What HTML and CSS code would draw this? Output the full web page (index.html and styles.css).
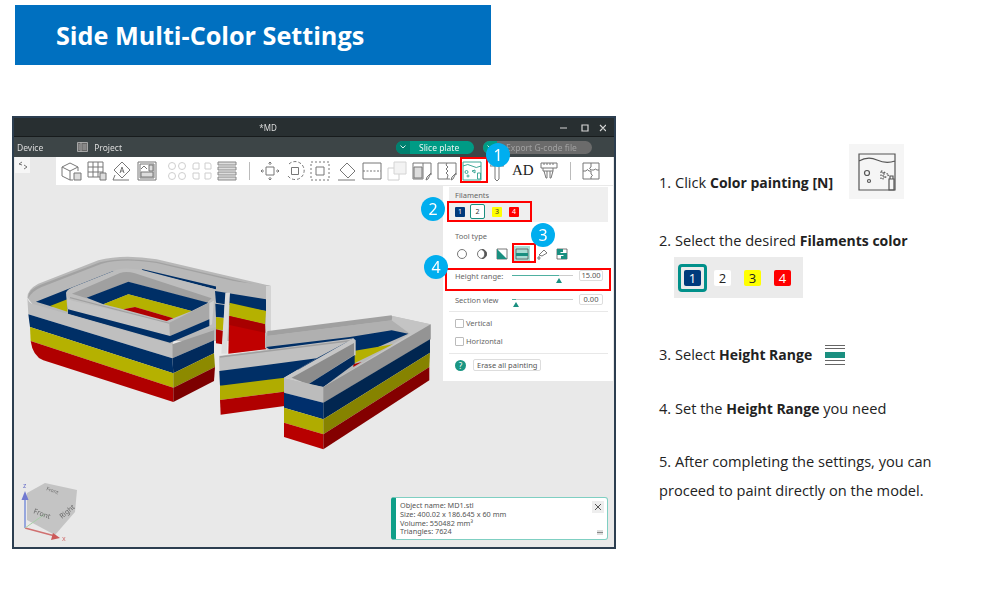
FILE: index.html
```html
<!DOCTYPE html>
<html>
<head>
  <meta charset="UTF-8">
  <title>Side Multi-Color Settings</title>
  <link rel="stylesheet" href="styles.css">
</head>
<body>
  <h1 class="banner">Side Multi-Color Settings</h1>

  <div class="content">
    <div class="app">
      <div class="titlebar">
        <span class="doc-name">*MD</span>
        <div class="win-btns">
          <svg width="46" height="10" viewBox="0 0 46 10"><path d="M0 5h7M22 2h6v6h-6zM40 2l6 6M46 2l-6 6"/></svg>
        </div>
      </div>

      <div class="menubar">
        <span class="menu-item">Device</span>
        <svg class="project-ico" width="11" height="10" viewBox="0 0 11 10"><path d="M.5.5h10v9H.5zM4 .5v9M1.5 3h1.5M1.5 5h1.5M1.5 7h1.5M5.500 3h4M5.500 5h4M5.500 7h4"/></svg>
        <span class="menu-item">Project</span>
        <div class="menu-right">
          <div class="pill pill-slice"><span class="pill-arrow"><svg width="6" height="4" viewBox="0 0 6 4"><path d="M.5.5L3 3 5.500.5"/></svg></span><span class="pill-text">Slice plate</span></div>
          <div class="pill pill-export"><span class="pill-arrow"><svg width="6" height="4" viewBox="0 0 6 4"><path d="M.5.5L3 3 5.500.5"/></svg></span><span class="pill-text">Export G-code file</span></div>
        </div>
      </div>

      <div class="viewport">
        <!-- the model, viewBox is in screenshot coords -->
        <svg class="model" width="600" height="391" viewBox="14 156 600 391">
          <g transform="translate(10 240) scale(.33333)">
            <path fill="#b8b8b8" d="M52,170Q52,145 85,128L265,58Q340,38 440,55L783,135V300H490L487,315L72,195Z"/>
            <path fill="#a2a2a2" d="M55,165Q58,145 90,132L270,64Q340,46 440,62L783,142V146L440,66Q340,50 275,68L95,138Q66,150 55,172Z"/>
            <path fill="#002f66" d="M78,182L310,90L325,95L175,160V205L120,195Z"/>
            <path fill="#b5b100" d="M120,195L172,175V212Z"/>
            <path fill="#002f66" d="M395,84L660,146V156L400,90Z"/>
            <path fill="#bdbdbd" d="M168,155Q172,145 190,138L320,86Q345,78 400,88L655,155V250L480,290L172,205Z"/>
            <path fill="#a0a0a0" d="M186,158L330,96Q350,90 375,97L605,172L590,186L355,122L230,172Z"/>
            <path fill="#002f66" d="M230,170L355,122L595,185L545,210L355,160L280,190Z"/>
            <path fill="#b5b100" d="M280,190L355,160L545,210L490,232L375,198L340,205Z"/>
            <path fill="#b00000" d="M340,205L375,198L490,232L470,240Z"/>
            <path fill="#c4c4c4" d="M170,160Q172,176 190,180L478,245V285L174,205Z"/>
            <path fill="#a0a0a0" d="M180,168L478,245V248L180,172Z"/>
            <path fill="#a8a8a8" d="M478,245L612,178L600,235L480,285Z"/>
            <path fill="#d0d0d0" d="M598,186L612,178L606,250L598,254Z"/>
            <path fill="#002f66" d="M174,205L480,285L598,235V255L480,305L174,218Z"/>
            <path fill="#bfbfbf" d="M52,170Q55,186 72,190L487,310V352L55,220Z"/>
            <path fill="#002f66" d="M55,220L487,352L490,397L60,258Z"/>
            <path fill="#b5b100" d="M60,258L490,397V440L62,300Z"/>
            <path fill="#b00000" d="M62,300L490,440V483L100,358Q68,345 62,300Z"/>
            <path fill="#9b9b9b" d="M487,310L612,268V298L487,352Z"/>
            <path fill="#012a5c" d="M487,352L612,298V337L490,397Z"/>
            <path fill="#8d8a00" d="M490,397L612,337L615,378L490,440Z"/>
            <path fill="#7d0000" d="M490,440L615,378L612,420L490,483Z"/>
          </g>
          <g transform="translate(210 280) scale(.33333)">
            <path fill="#b8b8b8" d="M18,-6L183,15V155H168L60,150L18,60Z"/>
            <path fill="#002f66" d="M15,30L168,55V90L18,65Z"/>
            <path fill="#b5b100" d="M58,65L168,90L165,130L58,105Z"/>
            <path fill="#c00000" d="M58,105L165,130L168,205L55,218Z"/>
            <path fill="#a80000" d="M58,105L165,130V155L58,132Z"/>
            <path fill="#d4d4d4" d="M168,15H183V158H168Z"/>
            <path fill="#002f66" d="M16,68L44,72L42,110L18,108Z"/>
            <path fill="#b5b100" d="M18,108L42,112L40,148L18,145Z"/>
            <path fill="#b00000" d="M18,145L40,150L37,190L18,187Z"/>
            <path fill="#dcdcdc" d="M46,35H60L50,218H34Z"/>
            <path fill="#b8b8b8" d="M165,155L545,105L660,130V180L340,365L165,200Z"/>
            <path fill="#a0a0a0" d="M172,150L545,103L548,118L172,165Z"/>
            <path fill="#b0b0b0" d="M168,165L545,118L600,158L430,172L168,196Z"/>
            <path fill="#002f66" d="M168,198L420,168L545,148L595,158L450,222L300,290Z"/>
            <path fill="#b4b000" d="M430,210L550,190L430,248Z"/>
            <path fill="#b00000" d="M430,250L455,243L430,258Z"/>
            <path fill="#c0c0c0" d="M27,225L432,172L320,232L222,290V335L30,315Z"/>
            <path fill="#a0a0a0" d="M30,226L425,176L432,180L30,230Z"/>
            <path fill="#002f66" d="M28,270L320,232L222,290V335L30,314Z"/>
            <path fill="#b0ac00" d="M30,314L224,290V332L30,357Z"/>
            <path fill="#b00000" d="M30,357L224,332V375L32,401Z"/>
            <path fill="#c6c6c6" d="M222,290L430,172L437,178V222L340,318Z"/>
            <path fill="#8c8c8c" d="M245,290L432,186V222L295,310Z"/>
            <path fill="#012a5c" d="M295,310L434,222V248L340,318Z"/>
            <path fill="#c4c4c4" d="M340,318L600,158L545,118L548,105L662,130V175L340,365Z"/>
            <path fill="#bcbcbc" d="M222,290L340,318V365L222,335Z"/>
            <path fill="#949494" d="M340,318L662,130V175L340,365Z"/>
            <path fill="#002f6c" d="M222,335L340,365V415L222,380Z"/>
            <path fill="#012650" d="M340,365L660,175V215L340,415Z"/>
            <path fill="#b0ac00" d="M222,380L340,415V460L222,425Z"/>
            <path fill="#868300" d="M340,415L660,215L658,258L340,460Z"/>
            <path fill="#b80000" d="M222,425L340,460V505L222,468Z"/>
            <path fill="#840000" d="M340,460L658,258V298L340,505Z"/>
          </g>
        </svg>

        <div class="toolbar">
          <svg class="tool tool-wide" viewBox="0 0 22 20"><path d="M2 6l8-4 8 4v4M2 6v9l8 4h3M2 6l8 4v9M10 10l8-4"/><path class="fill-grey" d="M14 12h7v7h-7z"/></svg>
          <svg class="tool" viewBox="0 0 20 20"><path d="M1 1h15v15H1zM1 6h15M1 11h15M6 1v15M11 1v15"/><path class="fill-grey" d="M13 12h6v7h-6z"/></svg>
          <svg class="tool" viewBox="0 0 20 20"><path d="M10 1l8 8-8 8-8-8zM1 19h16M3 14l-2 5"/><path d="M8 12l2-6 2 6M8.500 10h3"/></svg>
          <svg class="tool" viewBox="0 0 20 20"><path d="M1 1h18v18H1zM3 3h14v14H3z"/><path class="fill-grey" d="M4 11h12v5H4zM12 4h4v6h-4z"/><path d="M4 8l3-3 3 3"/></svg>
          <svg class="tool tool-faded gap-group" viewBox="0 0 20 20"><circle cx="5" cy="5" r="3.500"/><circle cx="15" cy="5" r="3.500"/><circle cx="5" cy="15" r="3.500"/><circle cx="15" cy="15" r="3.500"/></svg>
          <svg class="tool tool-faded" viewBox="0 0 20 20"><path d="M7 2H3Q1 2 1 4v4h6zM13 2h4q2 0 2 2v4h-6zM7 18H3q-2 0-2-2v-4h6zM13 18h4q2 0 2-2v-4h-6z"/></svg>
          <svg class="tool" viewBox="0 0 20 20"><path class="fill-light" d="M1 1h18v3H1zM1 6h18v3H1zM1 11h18v3H1zM1 16h18v3H1z"/></svg>
          <span class="tool-sep"></span>
          <svg class="tool gap-group" viewBox="0 0 20 20"><path d="M6 6h8v8H6zM10 1v3M8.500 2.500L10 1l1.500 1.500M10 19v-3M8.500 17.500L10 19l1.500-1.500M1 10h3M2.500 8.500L1 10l1.500 1.500M19 10h-3M17.500 8.500L19 10l-1.500 1.500"/></svg>
          <svg class="tool" viewBox="0 0 20 20"><path d="M6.500 6.500h7v7h-7z"/><path stroke-dasharray="3 2" d="M4 3a9 9 0 1 1-1 12"/></svg>
          <svg class="tool" viewBox="0 0 20 20"><path d="M6 6h8v8H6z"/><path stroke-dasharray="2 2" d="M1 1h18v18H1z"/></svg>
          <svg class="tool gap-small" viewBox="0 0 20 20"><path d="M10 2l8 8-7 7-8-8zM1 19h17M4 10l7 7"/></svg>
          <svg class="tool" viewBox="0 0 20 20"><path d="M1 2h18v16H1z"/><path stroke-dasharray="2 1.500" d="M1 10h18"/></svg>
          <svg class="tool tool-faded" viewBox="0 0 20 20"><path d="M1 7h11v12H1z"/><path class="fill-light" d="M7 1h12v12H7z"/></svg>
          <svg class="tool" viewBox="0 0 20 20"><path d="M1 2h18v12M1 2v16h10V2"/><path class="fill-grey" d="M2 6h8v11H2z"/><path d="M19 12l-3 6-2 1 1-3z"/></svg>
          <svg class="tool" viewBox="0 0 20 20"><path d="M1 2h18v12M1 2v16h12M10 2l-1 2 2 2-2 2 2 2-2 2 2 2-1 4"/><path d="M19 12l-3 6-2 1 1-3z"/></svg>
          <svg class="tool tool-teal" viewBox="0 0 20 20"><path d="M1 1h18v18H1zM1 5q5-3 9 0t9 0"/><circle cx="4.500" cy="11" r="1.500"/><circle cx="6" cy="15" r="1"/><path d="M10 10l3-1v3zM15.500 12h3v6h-3z"/></svg>
          <svg class="tool tool-narrow" viewBox="0 0 14 20"><path d="M0 2h14v3H9v13l-2 2-2-2V5H0z"/></svg>
          <span class="tool-ad">AD</span>
          <svg class="tool" viewBox="0 0 20 20"><path d="M2 2h16v5H2zM5 2v2M8 2v2M11 2v2M14 2v2M4 7v3h10V7M5 10l2 7h1v-7M11 10v7h1l2-7"/></svg>
          <span class="tool-sep sep-late"></span>
          <svg class="tool" viewBox="0 0 20 20"><path d="M2 2h16v16H2zM10 2v4q-3 1 0 3M2 10h3q1-3 3 0h2v3q3 1 0 3v2M10 9h3q1-2 3 0h2"/></svg>
        </div>

        <button class="side-toggle" type="button">
          <svg width="10" height="9" viewBox="0 0 10 9"><path d="M4 1L1 3l3 1M6 4l3 2-3 2"/></svg>
        </button>

        <div class="panel">
          <div class="fil-section">
            <div class="panel-label">Filaments</div>
            <div class="fil-row">
              <span class="fil fil-blue">1</span>
              <span class="fil-ring"><span class="fil fil-white">2</span></span>
              <span class="fil fil-yellow">3</span>
              <span class="fil fil-red">4</span>
            </div>
          </div>
          <div class="tool-section">
            <div class="panel-label">Tool type</div>
            <div class="tt-row">
              <svg class="tt" viewBox="0 0 12 12"><circle cx="6" cy="6" r="4.500"/></svg>
              <svg class="tt" viewBox="0 0 12 12"><circle cx="6" cy="6" r="4.500"/><path class="fill-dark" d="M6 1.500a4.500 4.500 0 0 1 4.500 4.500A4.500 4.500 0 0 1 6 10.500a5 5 0 0 0 0-9z"/></svg>
              <svg class="tt" viewBox="0 0 12 12"><path d="M1 1h10v10H1z"/><path class="fill-teal" d="M1 1l10 10H1z"/></svg>
              <svg class="tt tt-active" viewBox="0 0 16 16"><path d="M2 3h12v10H2z"/><path class="fill-teal" d="M2 7h12v3H2z"/></svg>
              <svg class="tt" viewBox="0 0 12 12"><path d="M3 7l5-5 3 3-5 3zM2 9q2-1 2 1t-2 1z"/></svg>
              <svg class="tt" viewBox="0 0 12 12"><path d="M1 1h10v10H1z"/><path class="fill-teal" d="M1 1h6v3H4l3 3H1zM11 11H5V8h3L5 5h6z"/></svg>
            </div>
          </div>
          <div class="slider-row">
            <span class="slider-label">Height range:</span>
            <div class="slider"><span class="slider-fill"></span><span class="slider-thumb"></span></div>
            <span class="value-box">15.00</span>
          </div>
          <div class="slider-row slider-row-b">
            <span class="slider-label">Section view</span>
            <div class="slider slider-zero"><span class="slider-fill"></span><span class="slider-thumb"></span></div>
            <span class="value-box">0.00</span>
          </div>
          <div class="check-section">
            <label class="check"><span class="check-box"></span>Vertical</label>
            <label class="check"><span class="check-box"></span>Horizontal</label>
          </div>
          <div class="panel-foot">
            <span class="help">?</span>
            <span class="erase-btn">Erase all painting</span>
          </div>
        </div>

        <svg class="navcube" width="70" height="64" viewBox="14 480 70 64">
          <path fill="#c4c4c4" d="M27 493L45 483l32 7-2 22-20 23-28-15z"/>
          <path stroke="#7a8fd8" stroke-width="1.500" fill="none" d="M25 528V496"/>
          <path fill="#7079d0" d="M25 491l3.500 9h-7z"/>
          <path stroke="#d07070" stroke-width="1.500" fill="none" d="M25 528l30 8"/>
          <path fill="#cc5a5a" d="M60 538l-9 2 2-7z"/>
          <path stroke="#a8d0a8" fill="none" d="M25 528l20-14"/>
          <text class="nav-label" transform="translate(33 513) rotate(20)">Front</text>
          <text class="nav-label" transform="translate(62 519) rotate(-40)">Right</text>
          <text class="nav-label nav-small" transform="translate(46 490) rotate(20)">Front</text>
          <text class="nav-axis nav-z" x="23" y="488">z</text>
          <text class="nav-axis nav-x" x="62" y="541">x</text>
        </svg>

        <div class="info-card">
          <div class="info-lines">
            <div>Object name: MD1.stl</div>
            <div>Size: 400.02 x 186.645 x 60 mm</div>
            <div>Volume: 550482 mm³</div>
            <div>Triangles: 7624</div>
          </div>
          <span class="info-close">
            <svg width="8" height="8" viewBox="0 0 8 8"><path d="M1 1l6 6M7 1L1 7"/></svg>
          </span>
          <span class="info-min"></span>
        </div>
      </div>

      <span class="hl hl-1"></span>
      <span class="hl hl-2"></span>
      <span class="hl hl-3"></span>
      <span class="hl hl-4"></span>
      <span class="badge badge-1">1</span>
      <span class="badge badge-2">2</span>
      <span class="badge badge-3">3</span>
      <span class="badge badge-4">4</span>
    </div>

    <div class="steps">
      <div class="step step-1">
        <span class="step-1-text">1. Click <b>Color painting [N]</b></span>
        <span class="paint-box">
          <svg width="38" height="38" viewBox="0 0 38 38"><path d="M1 1h36v36H1zM1 8q9-5 18-1t18 1"/><circle cx="9" cy="20" r="2.500"/><circle cx="11" cy="28" r="1.500"/><path stroke-dasharray="1.500 1.500" d="M23 18h2v8h-2zM26 19l5 3-5 3z"/><path d="M31 26h5v11h-5zM32 26v-3h3v3"/></svg>
        </span>
      </div>
      <div class="step step-2">2. Select the desired <b>Filaments color</b></div>
      <div class="swatches">
        <span class="sw-ring"><span class="sw sw-blue">1</span></span>
        <span class="sw sw-white">2</span>
        <span class="sw sw-yellow">3</span>
        <span class="sw sw-red">4</span>
      </div>
      <div class="step step-3">
        <span>3. Select <b>Height Range</b></span>
        <span class="range-ico"><span></span><span></span><span class="range-mid"></span><span></span><span></span></span>
      </div>
      <div class="step step-4">4. Set the <b>Height Range</b> you need</div>
      <div class="step step-5">5. After completing the settings, you can<br>proceed to paint directly on the model.</div>
    </div>
  </div>
</body>
</html>
```

FILE: styles.css
```css
html, body {
  margin: 0;
  background: #fff;
}

body {
  width: 1000px;
  height: 600px;
  overflow: hidden;
  font-family: "Open Sans", "Noto Sans", sans-serif;
}

.banner {
  width: 476px;
  height: 60px;
  margin: 5px 0 0 15px;
  padding-left: 41px;
  box-sizing: border-box;
  background: #0070c0;
  color: #fff;
  font-size: 25.200px;
  font-weight: 700;
  line-height: 60px;
}

.content {
  display: flex;
  margin: 51px 0 0 12px;
}

/* app window */
.app {
  position: relative;
  display: flex;
  flex-direction: column;
  width: 604px;
  height: 433px;
  box-sizing: border-box;
  border: 2px solid #2c3e50;
  background: #e9e9e9;
  font-family: "Noto Sans", sans-serif;
  flex: none;
}

.titlebar {
  display: flex;
  align-items: center;
  justify-content: center;
  height: 18px;
  padding-right: 92px;
  background: #282f31;
  border-bottom: 1px solid #171b1c;
  position: relative;
  flex: none;
}

.titlebar, .menubar, .viewport {
  filter: blur(.35px);
}

.doc-name {
  color: #ddd;
  font-size: 8px;
}

.win-btns {
  position: absolute;
  right: 8px;
  top: 5px;
  line-height: 0;
}

.win-btns path {
  fill: none;
  stroke: #d5d5d5;
  stroke-width: 1.200;
}

.menubar {
  display: flex;
  align-items: center;
  height: 20px;
  padding-left: 3px;
  background: #3d4547;
  flex: none;
  color: #dcdcdc;
  font-size: 8.500px;
}

.project-ico {
  margin: 0 6px 0 34px;
}

.project-ico path {
  fill: #666;
  stroke: #bbb;
  stroke-width: .8;
}

.menu-right {
  display: flex;
  margin-left: auto;
  gap: 9px;
  margin-right: 22px;
}

.pill {
  display: flex;
  align-items: center;
  height: 13px;
  border-radius: 7px;
  overflow: hidden;
  color: #e8f5f2;
  font-size: 8.500px;
}

.pill-arrow {
  display: flex;
  align-items: center;
  justify-content: center;
  width: 14px;
  height: 13px;
  background: #00806f;
}

.pill-arrow path {
  fill: none;
  stroke: #d8f0ec;
}

.pill-slice {
  width: 78px;
  background: #009b85;
}

.pill-slice .pill-text {
  margin-left: 9px;
}

.pill-export {
  width: 109px;
  background: #6b6b6b;
  color: #a0a0a0;
}

.pill-export .pill-arrow {
  background: #009b85;
}

.pill-export .pill-text {
  margin-left: 9px;
}

.viewport {
  position: relative;
  flex: 1;
  background: #e9e9e9;
}

.model {
  position: absolute;
  left: 0;
  top: 0;
}

/* toolbar */
.toolbar {
  position: relative;
  display: flex;
  align-items: center;
  gap: 5px;
  width: 557px;
  height: 28px;
  margin-left: 42px;
  padding: 0 0 1px 4px;
  box-sizing: border-box;
  background: #fff;
}

.tool {
  width: 20px;
  height: 20px;
  flex: none;
}

.tool path, .tool circle {
  fill: none;
  stroke: #777;
  stroke-width: 1;
}

.tool-wide {
  width: 22px;
}

.tool-narrow {
  width: 14px;
  margin: 0 3px;
}

.tool .fill-grey {
  fill: #ddd;
}

.tool .fill-light {
  fill: #ddd;
  stroke: #888;
}

.tool-faded {
  opacity: .35;
}

.gap-group {
  margin-left: 5px;
}

.gap-small {
  margin-left: 2px;
}

.tool-sep {
  width: 1px;
  height: 18px;
  margin-left: 7px;
  background: #bbb;
  flex: none;
}

.sep-late {
  margin-left: 6px;
  margin-right: 5px;
}

.tool-teal path, .tool-teal circle {
  stroke: #3fa897;
}

.tool-ad {
  width: 22px;
  font-family: "Liberation Serif", serif;
  font-size: 15px;
  color: #222;
  flex: none;
}

.side-toggle {
  position: absolute;
  left: 1px;
  top: 0;
  width: 15px;
  height: 16px;
  padding: 0;
  border: 0;
  background: #f6f6f6;
  line-height: 0;
}

.side-toggle path {
  fill: none;
  stroke: #555;
  stroke-width: .8;
}

/* color painting panel */
.panel {
  position: absolute;
  left: 429px;
  top: 29px;
  width: 170px;
  height: 195px;
  padding: 1px 5px 0 6px;
  box-sizing: border-box;
  background: #fff;
  color: #666;
  font-size: 7.500px;
}

.fil-section {
  height: 35px;
  padding: 3px 6px 0;
  box-sizing: border-box;
  background: #efefef;
}

.panel-label {
  line-height: 11px;
}

.fil-row {
  display: flex;
  align-items: center;
  margin-top: 3px;
}

.fil {
  display: inline-block;
  width: 10px;
  height: 10px;
  border-radius: 1px;
  text-align: center;
  font-size: 7px;
  line-height: 10px;
}

.fil-blue {
  background: #003a7c;
  color: #fff;
}

.fil-ring {
  display: inline-flex;
  align-items: center;
  justify-content: center;
  width: 15px;
  height: 15px;
  margin: 0 5px;
  box-sizing: border-box;
  border: 1px solid #1a8f80;
  border-radius: 2px;
  background: #fff;
}

.fil-white {
  background: #fff;
  color: #333;
}

.fil-yellow {
  margin-left: 2px;
  background: #ff0;
  color: #333;
}

.fil-red {
  margin-left: 7px;
  background: #f00;
  color: #fff;
}

.tool-section {
  padding: 9px 6px 0;
}

.tt-row {
  display: flex;
  align-items: center;
  gap: 8px;
  height: 20px;
  margin: 2px 0 0 1px;
}

.tt {
  width: 12px;
  height: 12px;
  flex: none;
}

.tt path, .tt circle {
  fill: none;
  stroke: #555;
  stroke-width: .8;
}

.tt .fill-dark {
  fill: #555;
}

.tt .fill-teal {
  fill: #1a8f80;
  stroke: none;
}

.tt-active {
  width: 16px;
  height: 16px;
  margin: 0 -2px;
  background: #a9dcd4;
}

.slider-row {
  display: flex;
  align-items: center;
  height: 13px;
  margin-top: 5px;
  padding-left: 6px;
}

.slider-row-b {
  margin-top: 11px;
}

.slider-label {
  width: 57px;
  flex: none;
}

.slider {
  position: relative;
  width: 61px;
  height: 1px;
  background: #ccc;
  flex: none;
}

.slider-fill {
  display: block;
  width: 47px;
  height: 1px;
  background: #4fb0a0;
}

.slider-zero .slider-fill {
  width: 4px;
}

.slider-thumb {
  position: absolute;
  left: 44px;
  top: 3px;
  width: 0;
  height: 0;
  border: 3px solid transparent;
  border-top: 0;
  border-bottom: 5px solid #1a8f80;
}

.slider-zero .slider-thumb {
  left: 1px;
}

.value-box {
  width: 24px;
  height: 11px;
  margin-left: 6px;
  box-sizing: border-box;
  border: 1px solid #ddd;
  border-radius: 2px;
  text-align: center;
  line-height: 9px;
  color: #555;
  flex: none;
}

.check-section {
  margin-top: 5px;
  padding: 2px 6px 0;
  height: 39px;
  border-top: 1px solid #e8e8e8;
  border-bottom: 1px solid #e8e8e8;
}

.check {
  display: flex;
  align-items: center;
  gap: 2px;
  height: 18px;
}

.check-box {
  width: 9px;
  height: 9px;
  box-sizing: border-box;
  border: 1px solid #bbb;
  border-radius: 1px;
  background: #fff;
}

.panel-foot {
  display: flex;
  align-items: center;
  padding: 5px 0 0 6px;
}

.help {
  width: 11px;
  height: 11px;
  border-radius: 50%;
  background: #1a9683;
  color: #fff;
  text-align: center;
  font-size: 8px;
  line-height: 11px;
}

.erase-btn {
  margin-left: 7px;
  padding: 0 3px;
  height: 12px;
  box-sizing: border-box;
  border: 1px solid #ddd;
  border-radius: 2px;
  line-height: 10px;
  color: #555;
}

/* red marks and numbered badges on top of the window */
.hl {
  position: absolute;
  border: 2px solid #f00;
  box-sizing: border-box;
}

.hl-1 { left: 446px; top: 39px; width: 28px; height: 26px; }
.hl-2 { left: 433px; top: 83px; width: 85px; height: 21px; }
.hl-3 { left: 498px; top: 125px; width: 24px; height: 20px; }
.hl-4 { left: 431px; top: 150px; width: 166px; height: 23px; }

.badge {
  position: absolute;
  width: 24px;
  height: 24px;
  border-radius: 50%;
  background: #00aeef;
  color: #fff;
  text-align: center;
  font-size: 16px;
  line-height: 24px;
}

.badge-1 { left: 472px; top: 25px; }
.badge-2 { left: 407px; top: 79px; }
.badge-3 { left: 517px; top: 105px; }
.badge-4 { left: 410px; top: 137px; }

.navcube {
  position: absolute;
  left: 0;
  bottom: 3px;
  filter: blur(.5px);
}

.nav-label {
  fill: #666;
  font-size: 7px;
}

.nav-small {
  font-size: 5px;
}

.nav-axis {
  font-size: 7px;
}

.nav-z {
  fill: #6a70c8;
}

.nav-x {
  fill: #d07070;
}

.info-card {
  position: absolute;
  left: 377px;
  bottom: 7px;
  width: 217px;
  height: 43px;
  padding: 3px 0 0 4px;
  box-sizing: border-box;
  border: 1px solid #7fcfc2;
  border-left: 5px solid #0f9f88;
  border-radius: 3px;
  background: #fff;
  color: #555;
  font-size: 7.300px;
  line-height: 8.800px;
}

.info-close {
  position: absolute;
  right: 3px;
  top: 3px;
  display: flex;
  align-items: center;
  justify-content: center;
  width: 12px;
  height: 12px;
  background: #eee;
}

.info-close path {
  fill: none;
  stroke: #555;
}

.info-min {
  position: absolute;
  right: 4px;
  bottom: 4px;
  width: 6px;
  height: 5px;
  background: linear-gradient(#ddd 2px, #888 2px, #888 3px, #ddd 3px);
}

/* steps column */
.steps {
  margin-left: 43px;
  color: #222;
  font-size: 14.600px;
  line-height: 29px;
}

.step b {
  font-size: 14px;
  font-weight: 700;
}

.step-1 {
  display: flex;
  align-items: center;
  margin-top: 28px;
}

.step-1-text {
  margin-top: 22px;
}

.paint-box {
  display: flex;
  align-items: center;
  justify-content: center;
  width: 55px;
  height: 55px;
  margin-left: 16px;
  background: #f5f5f5;
}

.paint-box path, .paint-box circle {
  fill: none;
  stroke: #555;
  stroke-width: 1.200;
}

.step-2 {
  margin-top: 27px;
}

.swatches {
  display: flex;
  align-items: center;
  width: 129px;
  height: 41px;
  margin: 2px 0 0 15px;
  padding-left: 4px;
  box-sizing: border-box;
  background: #ebebeb;
}

.sw {
  display: block;
  width: 17px;
  height: 16px;
  border-radius: 2px;
  text-align: center;
  font-size: 13px;
  line-height: 16px;
  flex: none;
}

.sw-ring {
  padding: 3px;
  margin-right: 7px;
  border: 3px solid #00908a;
  border-radius: 4px;
}

.sw-blue { background: #003a7c; color: #fff; }
.sw-white { background: #fff; color: #222; }
.sw-yellow { background: #ff0; color: #222; margin-left: 13px; }
.sw-red { background: #f00; color: #fff; margin-left: 13px; }

.step-3 {
  display: flex;
  align-items: center;
  margin-top: 42px;
}

.range-ico {
  display: flex;
  flex-direction: column;
  justify-content: space-between;
  width: 20px;
  height: 20px;
  margin-left: 13px;
}

.range-ico span {
  display: block;
  height: 1px;
  background: #666;
}

.range-ico .range-mid {
  height: 6px;
  background: #1a8f80;
}

.step-4 {
  margin-top: 25px;
}

.step-5 {
  margin-top: 24px;
}
```
